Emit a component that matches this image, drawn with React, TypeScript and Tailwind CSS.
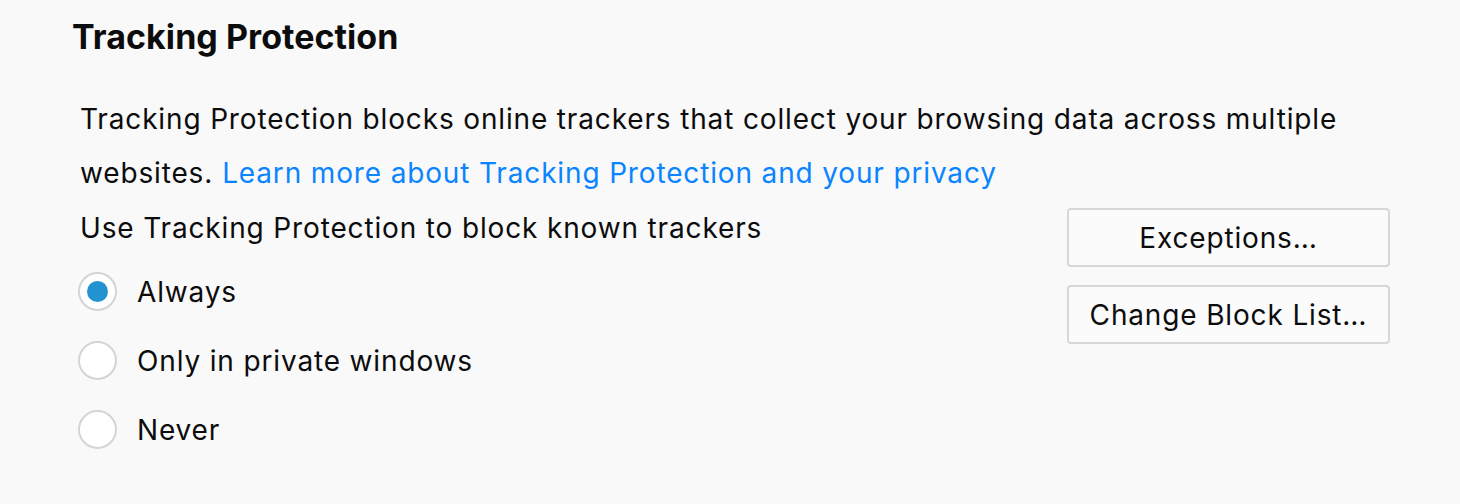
import { useState } from 'react';

type tOption = {
    id: string;
    label: string;
}

const options: tOption[] = [
    { id: 'always', label: 'Always' },
    { id: 'private', label: 'Only in private windows' },
    { id: 'never', label: 'Never' },
]

const Radio = ({ checked, label, onClick }: { checked: boolean; label: string; onClick: () => void }) => {
    return <label className="flex items-center h-[69px] cursor-pointer" onClick={onClick}>
        <span className="-ml-[2px] w-[39px] h-[39px] rounded-full border-2 border-[#d4d4d8] bg-white flex items-center justify-center shrink-0">
            {checked && <span className="w-[21px] h-[21px] rounded-full bg-[#2292d0]"></span>}
        </span>
        <span className="ml-[20px]">{label}</span>
    </label>
}

const App = () => {
    const [mode, setMode] = useState<string>('always');

    return <div className="w-[1460px] h-[504px] bg-[#f9f9fa] text-[#0c0c0d] font-['Inter','Liberation_Sans',sans-serif] overflow-hidden">
        <div className="pl-[72px] pt-[14px]">
            <h1 className="text-[34px] font-bold leading-[46px] tracking-[0.05px]">Tracking Protection</h1>
        </div>
        <div className="pl-[80px] pr-[70px] text-[28px] tracking-[0.85px]">
            <div className="mt-[32px] leading-[54px]">
                <div>Tracking Protection blocks online trackers that collect your browsing data across multiple</div>
                <div className="flex gap-[9px]">
                    <span>websites.</span>
                    <a href="#" className="text-[#0a84ff]">Learn more about Tracking Protection and your privacy</a>
                </div>
            </div>
            <div className="flex justify-between mt-[5px]">
                <div>
                    <div className="leading-[46px]">Use Tracking Protection to block known trackers</div>
                    <div className="mt-[6px]">
                        {options.map((v) => (
                            <Radio key={v.id} checked={mode === v.id} label={v.label} onClick={() => setMode(v.id)} />
                        ))}
                    </div>
                </div>
                <div className="flex flex-col gap-[18px] pt-[3px]">
                    <button className="w-[323px] h-[59px] border-2 border-[#d7d7db] rounded-[4px] bg-[#fbfbfb]">Exceptions…</button>
                    <button className="w-[323px] h-[59px] border-2 border-[#d7d7db] rounded-[4px] bg-[#fbfbfb]">Change Block List…</button>
                </div>
            </div>
        </div>
    </div>
}

export default App;
